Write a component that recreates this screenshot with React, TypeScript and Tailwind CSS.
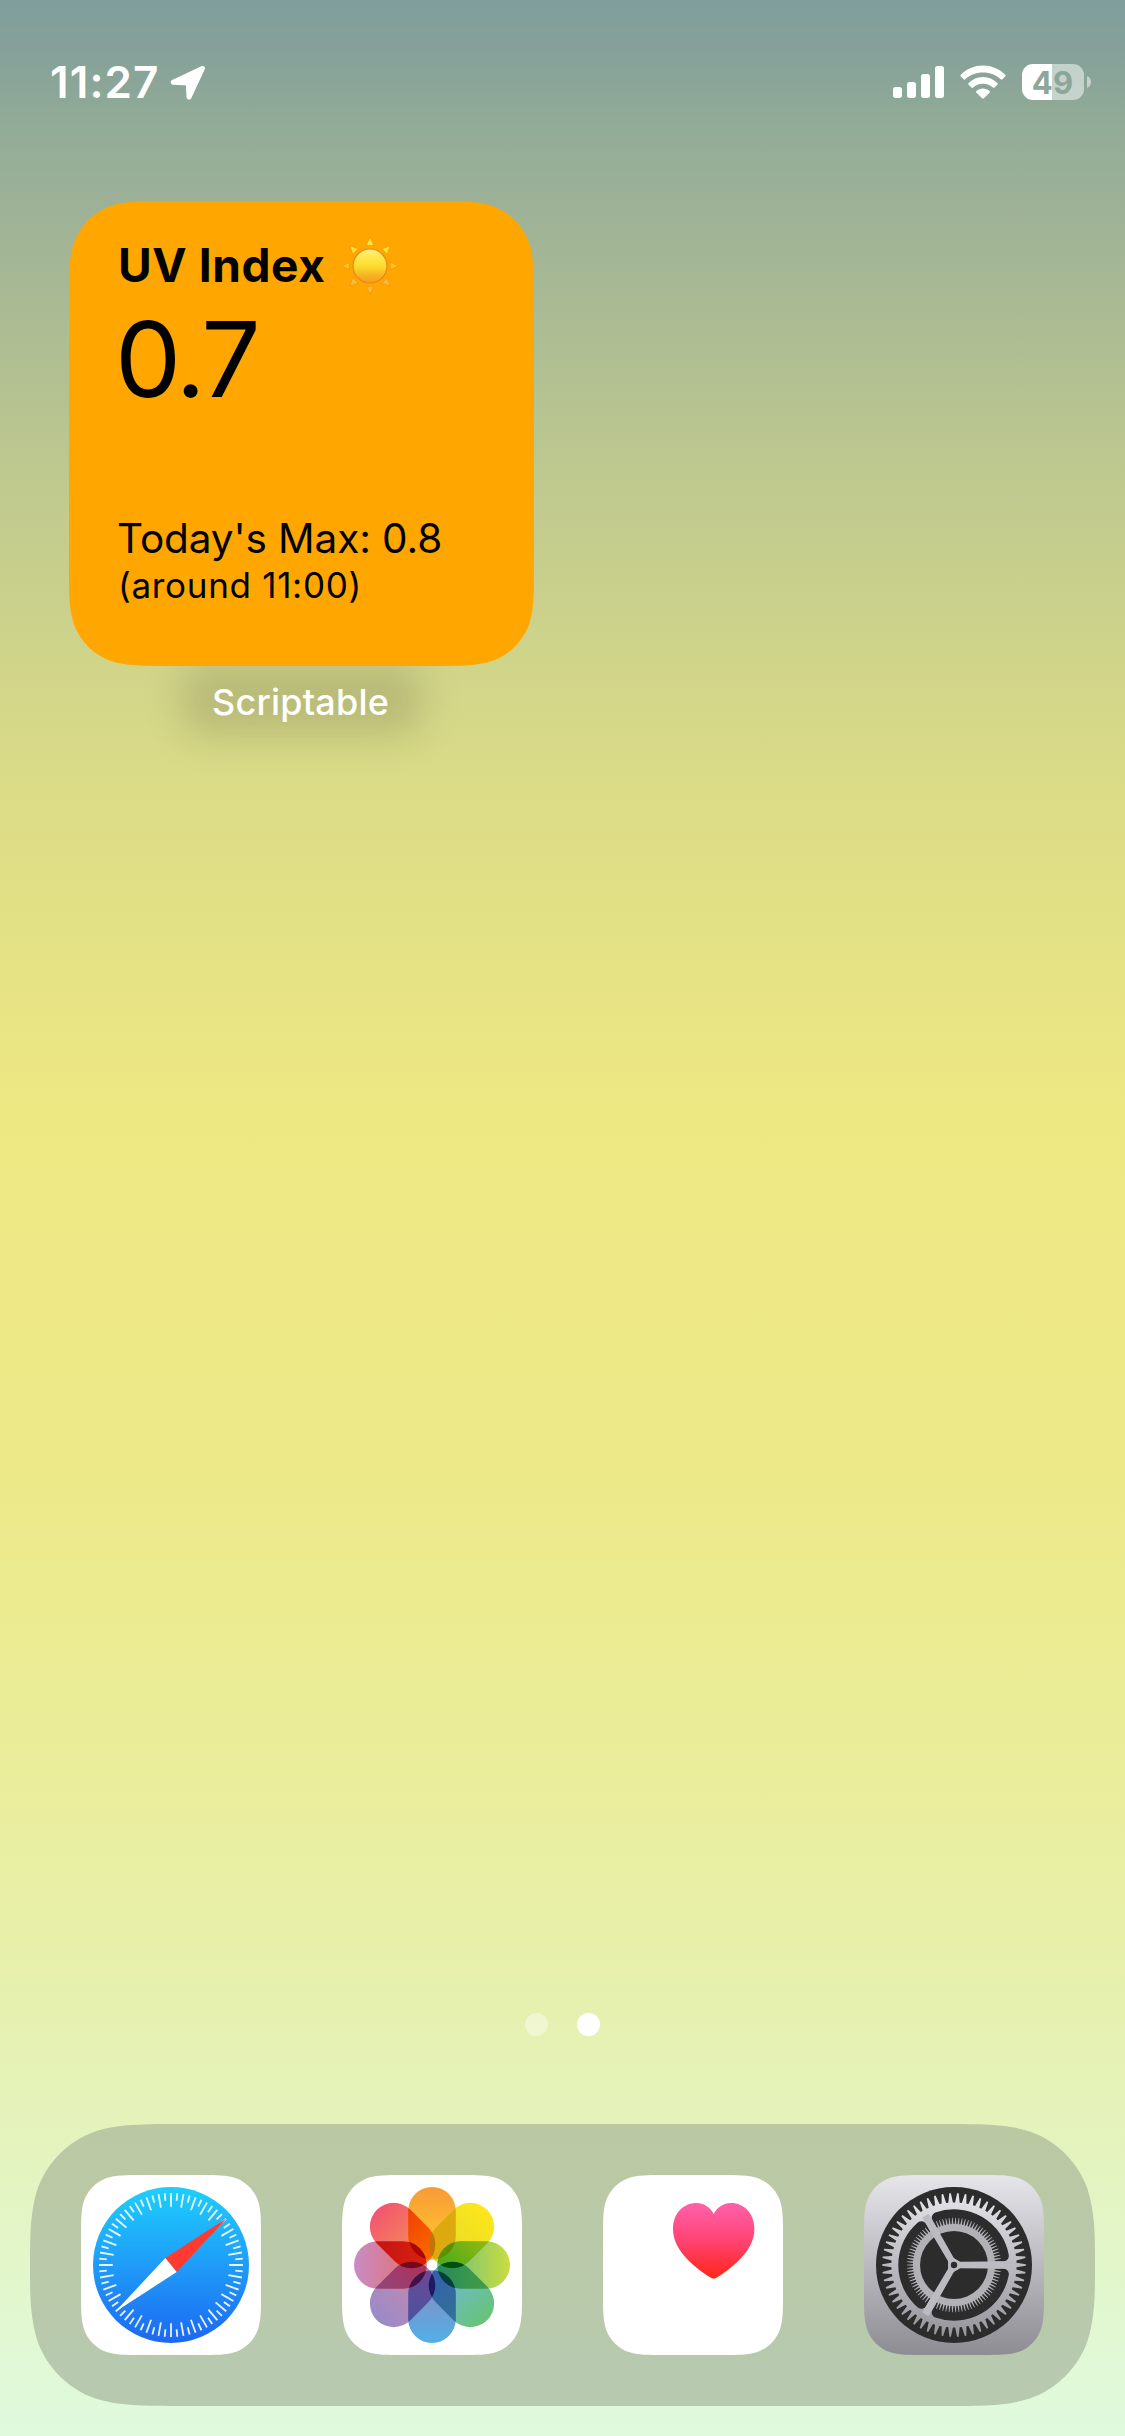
import React from "react";

/** Continuous-curvature rounded rectangle path. */
function squircle(w: number, h: number, r: number): string {
  const ex = Math.min(1.52866 * r, w / 2);
  const ey = Math.min(1.52866 * r, h / 2);
  const corner = (fx: (n: number) => number, fy: (n: number) => number, flip: boolean) => {
    const p = (a: number, b: number) => `${fx(a).toFixed(2)} ${fy(b).toFixed(2)}`;
    const top = [
      p(ex, 0),
      p(1.08849 * r, 0),
      p(0.86841 * r, 0),
      p(0.63149 * r, 0.07491 * r),
      p(0.37282 * r, 0.16906 * r),
      p(0.16906 * r, 0.37282 * r),
      p(0.07491 * r, 0.63149 * r),
      p(0, 0.86841 * r),
      p(0, 1.08849 * r),
      p(0, ey),
    ];
    const q = flip ? top.reverse() : top;
    return `${q[0]} C ${q[1]} ${q[2]} ${q[3]} C ${q[4]} ${q[5]} ${q[6]} C ${q[7]} ${q[8]} ${q[9]}`;
  };
  const L = (n: number) => n;
  const R = (n: number) => w - n;
  const B = (n: number) => h - n;
  return `M ${corner(R, L, false)} L ${corner(R, B, true)} L ${corner(L, B, false)} L ${corner(L, L, true)} Z`;
}

const clip = (w: number, h: number, r: number) => ({ clipPath: `path("${squircle(w, h, r)}")` });

function range(n: number) {
  return Array.from({ length: n }, (_, i) => i);
}

function LocationArrow() {
  return (
    <svg className="h-[38px] w-[38px]" viewBox="0 0 38 38" fill="#fff" stroke="#fff" strokeWidth="5" strokeLinejoin="round">
      <path d="M33.4 4.4 L4.3 18.3 L19.3 18.9 L20 33.2 Z" />
    </svg>
  );
}

function Signal() {
  return (
    <svg className="h-8 w-[51px]" viewBox="0 0 51 32" fill="#fff">
      <rect x="0" y="21" width="9" height="11" rx="2.7" />
      <rect x="14" y="16" width="9" height="16" rx="2.7" />
      <rect x="28" y="8" width="9" height="24" rx="2.7" />
      <rect x="42" y="0" width="9" height="32" rx="2.7" />
    </svg>
  );
}

function Wifi() {
  return (
    <svg className="h-[34px] w-[46px]" viewBox="0 0 46 34" fill="#fff">
      <path d="M23 7.4 C30 7.4 36.2 10 40.8 14.3 C41.3 14.8 42 14.8 42.4 14.3 L45.2 11.5 C45.8 10.9 45.8 10.2 45.2 9.7 C39.4 3.8 31.6 0.4 23 0.4 C14.4 0.4 6.6 3.8 0.8 9.7 C0.2 10.2 0.2 10.9 0.8 11.5 L3.6 14.3 C4 14.8 4.7 14.8 5.2 14.3 C9.8 10 16 7.4 23 7.4 Z" />
      <path d="M23 18.8 C26.9 18.8 30.4 20.2 33 22.6 C33.5 23 34.1 23 34.6 22.5 L37.3 19.8 C37.9 19.2 37.9 18.5 37.3 18 C33.5 14.4 28.5 12.1 23 12.1 C17.5 12.1 12.5 14.4 8.7 18 C8.1 18.5 8.1 19.2 8.7 19.8 L11.4 22.5 C11.9 23 12.5 23 13 22.6 C15.6 20.2 19.1 18.8 23 18.8 Z" />
      <path d="M23 23.6 C25.6 23.6 27.8 24.5 29.6 26.1 C30.1 26.6 30.1 27.2 29.6 27.7 L23.9 33.2 C23.3 33.8 22.7 33.8 22.1 33.2 L16.4 27.7 C15.9 27.2 15.9 26.6 16.4 26.1 C18.2 24.5 20.4 23.6 23 23.6 Z" />
    </svg>
  );
}

function Battery() {
  return (
    <div className="flex items-center gap-[3px]">
      <div className="flex h-9 w-[62px] items-center justify-center overflow-hidden rounded-[11px] bg-[linear-gradient(to_right,#fff_30px,rgba(255,255,255,0.5)_30px)] pr-px text-[31px] leading-none font-bold tracking-[0.2px] text-[#8ba69a]">
        49
      </div>
      <svg className="h-3 w-1" viewBox="0 0 4 12" fill="rgba(255,255,255,0.5)">
        <path d="M0 0 C2.5 1 4 3.2 4 6 C4 8.8 2.5 11 0 12 Z" />
      </svg>
    </div>
  );
}

function Sun() {
  return (
    <svg className="h-[60px] w-[60px]" viewBox="-30 -30 60 60">
      <defs>
        <linearGradient id="sunBody" x1="0" y1="0" x2="0" y2="1">
          <stop offset="0" stopColor="#fff08a" />
          <stop offset="0.25" stopColor="#ffe84a" />
          <stop offset="0.5" stopColor="#fddc2e" />
          <stop offset="0.8" stopColor="#f5b021" />
          <stop offset="1" stopColor="#f59d1c" />
        </linearGradient>
        <linearGradient id="sunRays" gradientUnits="userSpaceOnUse" x1="0" y1="-29" x2="0" y2="29">
          <stop offset="0" stopColor="#fff03a" />
          <stop offset="0.5" stopColor="#ffc51f" />
          <stop offset="1" stopColor="#f8b53c" />
        </linearGradient>
      </defs>
      <path
        fill="url(#sunRays)"
        stroke="#e58a1a"
        strokeOpacity="0.6"
        strokeWidth="0.8"
        d="M0 -28.5 L3.7 -20.6 H-3.7 Z M0 28.5 L3.7 20.6 H-3.7 Z M-28.5 0 L-20.6 -3.4 V3.4 Z M28.5 0 L20.6 -3.4 V3.4 Z M-20 -20 L-11.8 -17.2 L-17.2 -11.8 Z M20 -20 L11.8 -17.2 L17.2 -11.8 Z M-20 20 L-11.8 17.2 L-17.2 11.8 Z M20 20 L11.8 17.2 L17.2 11.8 Z"
      />
      <circle r="17" fill="url(#sunBody)" stroke="#e58a1a" strokeWidth="1.2" />
    </svg>
  );
}

function SafariIcon() {
  return (
    <svg className="h-[180px] w-[180px]" viewBox="0 0 180 180">
      <defs>
        <linearGradient id="safari" x1="0" y1="0" x2="0" y2="1">
          <stop offset="0" stopColor="#1dcffd" />
          <stop offset="0.5" stopColor="#1f9cf8" />
          <stop offset="1" stopColor="#1d68f1" />
        </linearGradient>
      </defs>
      <path d={squircle(180, 180, 40.5)} fill="#fff" />
      <circle cx="90" cy="90" r="78" fill="url(#safari)" />
      <g stroke="#fff" strokeOpacity="0.9" strokeWidth="1.8" strokeLinecap="butt">
        {range(72).map((i) => (
          <line key={i} x1="90" x2="90" y1="18" y2={i % 2 ? 25.5 : 31.8} transform={`rotate(${i * 5} 90 90)`} />
        ))}
      </g>
      <path d="M146 43 L84.3 83 L95.7 97 Z" fill="#ff3b30" />
      <path d="M34 137 L84.3 83 L95.7 97 Z" fill="#fff" />
    </svg>
  );
}

/* Petals run clockwise from the top: tip colour, inner colour. */
const PETALS = [
  ["#f99a38", "#fdc22d"],
  ["#fde61a", "#e9dc28"],
  ["#c9dd40", "#7cc474"],
  ["#66c474", "#72b9d0"],
  ["#50b0e6", "#8290c8"],
  ["#9a8ac8", "#c08ab0"],
  ["#c98bc4", "#e07478"],
  ["#f4556e", "#f28a5a"],
];
/* Where a petal crosses the next one: outer colour, inner colour. */
const PAIRS = [
  ["#dcaa0e", "#dcaa0e"],
  ["#9cba10", "#4cab1c"],
  ["#48a044", "#268a58"],
  ["#32748e", "#3560b0"],
  ["#4555a0", "#6c4896"],
  ["#8a4a82", "#b03058"],
  ["#c01418", "#d9200c"],
  ["#ee3a00", "#fb6a00"],
];
/* Where three petals meet. */
const TRIPLES = ["#5f8f02", "#00500f", "#00403a", "#1c1c60", "#40124a", "#700a1c", "#aa0408", "#c47400"];

function PhotosIcon() {
  const petal = { x: 66.2, y: 12, width: 47.6, height: 72.8, rx: 23.8 };
  return (
    <svg className="h-[180px] w-[180px]" viewBox="0 0 180 180">
      <defs>
        {PETALS.map(([tip, inner], i) => (
          <React.Fragment key={i}>
            <linearGradient id={`petal${i}`} x1="0" y1="0" x2="0" y2="1">
              <stop offset="0" stopColor={tip} />
              <stop offset="0.75" stopColor={inner} />
            </linearGradient>
            <linearGradient id={`pair${i}`} x1="0" y1="0.2" x2="0" y2="1">
              <stop offset="0" stopColor={PAIRS[i][0]} />
              <stop offset="1" stopColor={PAIRS[i][1]} />
            </linearGradient>
            <clipPath id={`next${i}`}>
              <rect {...petal} transform={`rotate(${i * 45} 90 90)`} />
            </clipPath>
          </React.Fragment>
        ))}
      </defs>
      <path d={squircle(180, 180, 40.5)} fill="#fff" />
      {range(8).map((i) => (
        <rect key={i} {...petal} fill={`url(#petal${i})`} transform={`rotate(${i * 45} 90 90)`} />
      ))}
      {range(8).map((i) => (
        <g key={i} clipPath={`url(#next${(i + 1) % 8})`}>
          <rect {...petal} fill={`url(#pair${i})`} transform={`rotate(${i * 45} 90 90)`} />
        </g>
      ))}
      {range(8).map((i) => (
        <g key={i} clipPath={`url(#next${(i + 2) % 8})`}>
          <rect {...petal} fill={TRIPLES[i]} transform={`rotate(${i * 45} 90 90)`} />
        </g>
      ))}
    </svg>
  );
}

function HealthIcon() {
  return (
    <svg className="h-[180px] w-[180px]" viewBox="0 0 180 180">
      <defs>
        <linearGradient id="heart" x1="0" y1="0" x2="0" y2="1">
          <stop offset="0" stopColor="#ff61ad" />
          <stop offset="0.5" stopColor="#ff4373" />
          <stop offset="1" stopColor="#ff2616" />
        </linearGradient>
      </defs>
      <path d={squircle(180, 180, 40.5)} fill="#fff" />
      <path
        d="M110.7 39 C107 32 101 28 93.5 28 C80 28 70 38.5 70 54 C70 74 88 90 107.5 102.6 C109.6 104 111.8 104 113.9 102.6 C133.4 90 151.4 74 151.4 54 C151.4 38.5 141.4 28 127.9 28 C120.4 28 114.4 32 110.7 39 Z"
        fill="url(#heart)"
      />
    </svg>
  );
}

function gear(n: number, root: number, tip: number, rootHalf: number, tipHalf: number, phase: number) {
  const at = (r: number, deg: number) => {
    const a = ((deg - 90) * Math.PI) / 180;
    return `${(90 + r * Math.cos(a)).toFixed(2)} ${(90 + r * Math.sin(a)).toFixed(2)}`;
  };
  const step = 360 / n;
  return (
    "M " +
    range(n)
      .map((i) => {
        const c = (i + phase) * step;
        return [
          at(root, c - rootHalf * step),
          at(tip, c - tipHalf * step),
          at(tip, c + tipHalf * step),
          at(root, c + rootHalf * step),
        ].join(" L ");
      })
      .join(" L ") +
    " Z"
  );
}

/** Ring segment lying between two spokes, starting clockwise of the right-hand spoke. */
function slot(inner: number, outer: number, edge: number) {
  const at = (r: number, a: number) => `${(90 + r * Math.cos(a)).toFixed(2)} ${(90 + r * Math.sin(a)).toFixed(2)}`;
  const third = (2 * Math.PI) / 3;
  const o = Math.asin(edge / outer);
  const i = Math.asin(edge / inner);
  return `M ${at(outer, o)} A ${outer} ${outer} 0 0 1 ${at(outer, third - o)} L ${at(inner, third - i)} A ${inner} ${inner} 0 0 0 ${at(inner, i)} Z`;
}

function SettingsIcon() {
  return (
    <svg className="h-[180px] w-[180px]" viewBox="0 0 180 180">
      <defs>
        <linearGradient id="plate" x1="0" y1="0" x2="0" y2="1">
          <stop offset="0" stopColor="#e5e5ea" />
          <stop offset="0.5" stopColor="#bab9bf" />
          <stop offset="1" stopColor="#8d8c92" />
        </linearGradient>
        <linearGradient id="wheel" x1="0" y1="0" x2="0" y2="1">
          <stop offset="0" stopColor="#e4e4e9" />
          <stop offset="0.5" stopColor="#bcbbc1" />
          <stop offset="1" stopColor="#96959b" />
        </linearGradient>
      </defs>
      <path d={squircle(180, 180, 40.5)} fill="url(#plate)" />
      <circle cx="90" cy="90" r="78" fill="#2c2c2d" />
      <path d={gear(58, 62.6, 71.8, 0.34, 0.1, 0.5)} fill="url(#wheel)" />
      <g fill="#2c2c2d" stroke="#2c2c2d" strokeWidth="11" strokeLinejoin="round">
        {[0, 120, 240].map((a) => (
          <path key={a} d={slot(42, 50.2, 9.1)} transform={`rotate(${a} 90 90)`} />
        ))}
      </g>
      <path d={gear(90, 41, 47.2, 0.3, 0.1, 0.5)} fill="#b2b1b6" />
      <circle cx="90" cy="90" r="34" fill="#2c2c2d" />
      <g fill="#bcbbc1">
        {[0, 120, 240].map((a) => (
          <path
            key={a}
            d="M90 83 C92 85 93.5 86.7 97 86.7 L147 86.2 V93.8 L97 93.3 C93.5 93.3 92 95 90 97 Z"
            transform={`rotate(${a} 90 90)`}
          />
        ))}
        <circle cx="90" cy="90" r="6" />
      </g>
      <circle cx="90" cy="90" r="3.2" fill="#2c2c2d" />
    </svg>
  );
}

export default function App() {
  return (
    <main className="flex h-[2436px] w-[1125px] flex-col overflow-hidden bg-[linear-gradient(to_bottom,#7f9e9c_0px,#85a199_50px,#93ac97_130px,#9bb097_190px,#bdc88f_460px,#dadb87_770px,#eee883_1110px,#ede988_1460px,#eaed9a_1770px,#e6f1b1_2020px,#e5f3bb_2120px,#dffadd_2436px)] font-['Inter',sans-serif]">
      <header className="flex h-[201px] items-start justify-between pt-16 pr-[34px] pl-[50px]">
        <div className="flex items-start gap-[9px]">
          <span className="text-[44px] leading-[36px] font-semibold tracking-[1.1px] text-white">11:27</span>
          <LocationArrow />
        </div>
        <div className="flex items-center gap-4">
          <Signal />
          <Wifi />
          <Battery />
        </div>
      </header>

      <section className="ml-[69px] flex w-[465px] flex-col items-center">
        <div
          className="relative z-10 flex h-[465px] w-[465px] flex-col bg-[#ffa600] px-[49px] pt-[35px] pb-[58px] text-black"
          style={clip(465, 465, 66)}
        >
          <div className="flex items-start gap-[15px]">
            <span className="text-[46px] leading-[58px] font-bold tracking-[0.6px] whitespace-nowrap">UV Index</span>
            <Sun />
          </div>
          <div className="-ml-[3px] text-[105px] leading-[126px] tracking-[-3px]">0.7</div>
          <div className="mt-auto">
            <div className="-ml-px text-[40.5px] leading-[49px] tracking-[-0.1px] whitespace-nowrap">Today's Max: 0.8</div>
            <div className="text-[35px] leading-[45px] tracking-[0.7px] whitespace-nowrap">(around 11:00)</div>
          </div>
        </div>
        <div className="relative flex h-[72px] items-center px-7">
          <div className="absolute -inset-x-1 -top-1 bottom-0 rounded-3xl bg-black/12 blur-[18px]" />
          <span className="relative -left-px text-[36px] leading-[44px] font-medium tracking-[0.2px] text-white">Scriptable</span>
        </div>
      </section>

      <nav className="mt-auto mb-[88px] flex justify-center gap-[29px]">
        <span className="h-[23px] w-[23px] rounded-full bg-white/40" />
        <span className="h-[23px] w-[23px] rounded-full bg-white" />
      </nav>

      <footer
        className="mb-[30px] ml-[30px] flex h-[282px] w-[1065px] shrink-0 items-center gap-[81px] bg-[linear-gradient(to_bottom,#bbc8a2,#b7cab0)] pl-[51px]"
        style={clip(1065, 282, 102)}
      >
        <SafariIcon />
        <PhotosIcon />
        <HealthIcon />
        <SettingsIcon />
      </footer>
    </main>
  );
}
